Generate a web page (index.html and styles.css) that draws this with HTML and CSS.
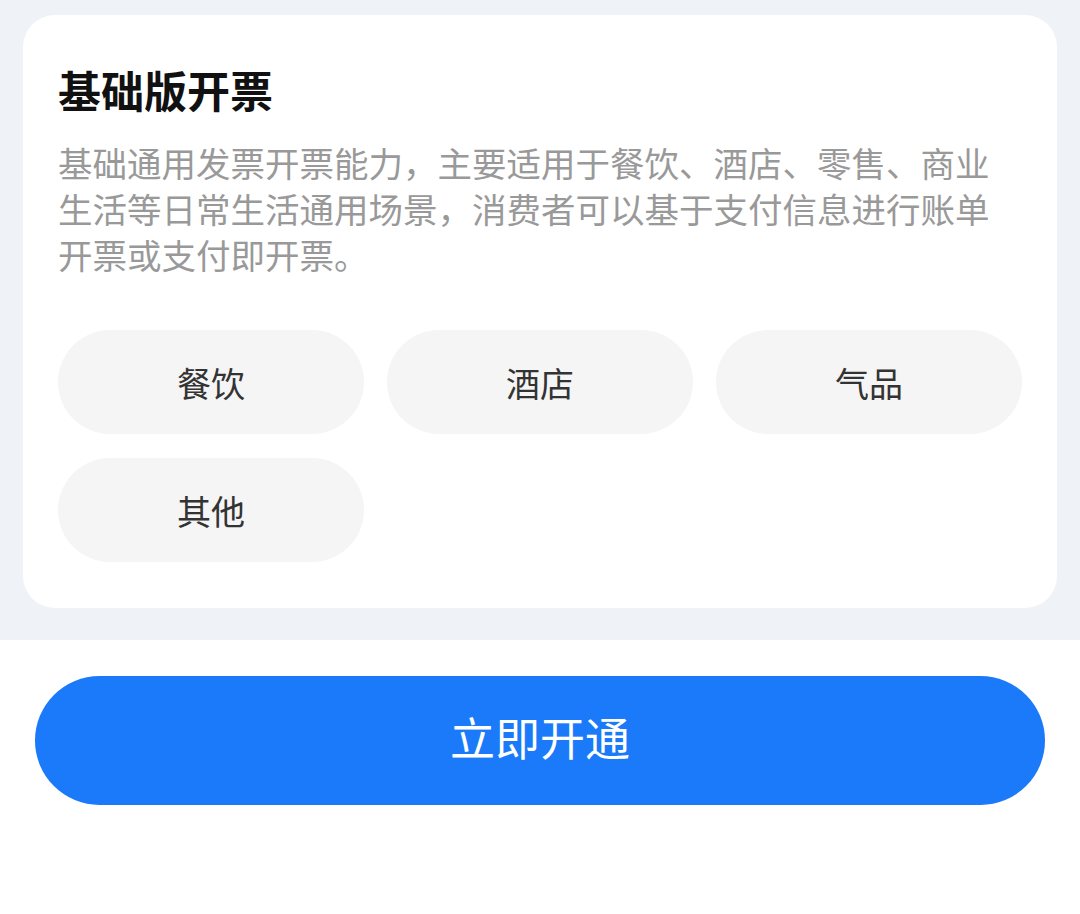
FILE: index.html
```html
<!DOCTYPE html>
<html lang="zh-CN">
<head>
<meta charset="utf-8">
<link rel="stylesheet" href="styles.css">
</head>
<body>
<div class="top">
  <section class="card">
    <h1 class="title">基础版开票</h1>
    <p class="desc">基础通用发票开票能力，主要适用于餐饮、酒店、零售、商业生活等日常生活通用场景，消费者可以基于支付信息进行账单开票或支付即开票。</p>
    <div class="tags">
      <div class="tag">餐饮</div>
      <div class="tag">酒店</div>
      <div class="tag">气品</div>
      <div class="tag">其他</div>
    </div>
  </section>
</div>
<div class="bottom">
  <button class="btn">立即开通</button>
</div>
</body>
</html>
```
FILE: styles.css
```css
html, body {
  margin: 0;
  padding: 0;
  background: #ffffff;
  font-family: "Noto Sans CJK SC", "Noto Sans", sans-serif;
}
.top {
  background: #eff2f6;
  padding: 15px 23px 32px;
}
.card {
  background: #ffffff;
  border-radius: 32px;
  padding: 46px 35px 46px;
}
.title {
  margin: 0;
  font-size: 43px;
  line-height: 56px;
  font-weight: 700;
  color: #111111;
}
.desc {
  margin: 22px 0 0;
  font-size: 34.5px;
  line-height: 46px;
  color: #999999;
}
.tags {
  margin-top: 53px;
  display: grid;
  grid-template-columns: repeat(3, 306px);
  column-gap: 23px;
  row-gap: 24px;
}
.tag {
  height: 104px;
  border-radius: 52px;
  background: #f5f5f5;
  display: flex;
  align-items: center;
  justify-content: center;
  font-size: 34px;
  color: #333333;
}
.bottom {
  padding: 36px 35px 0;
}
.btn {
  display: block;
  width: 100%;
  height: 129px;
  border: none;
  border-radius: 65px;
  background: #1a7afa;
  color: #ffffff;
  font-family: inherit;
  font-size: 45px;
  padding: 0 0 8px;
}
```
